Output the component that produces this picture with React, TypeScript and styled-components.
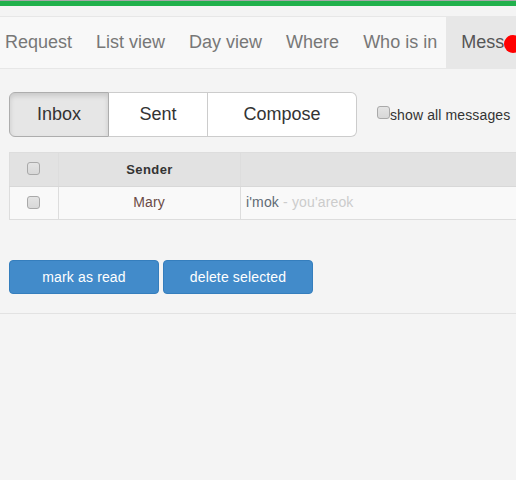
import styled, { createGlobalStyle } from "styled-components";

const GlobalStyle = createGlobalStyle`
  html, body {
    margin: 0;
    padding: 0;
    background: #f4f4f4;
    overflow: hidden;
  }
  * {
    box-sizing: border-box;
  }
`;

const Page = styled.div`
  width: 516px;
  height: 480px;
  overflow: hidden;
  font-family: "Liberation Sans", Arial, sans-serif;
  background: #f4f4f4;
`;

const TopBar = styled.div`
  height: 6px;
  background: #22b14c;
  border-top: 1px solid #a8a8a8;
`;

const Nav = styled.nav`
  display: flex;
  width: 640px;
  height: 53px;
  margin-top: 10px;
  padding-left: 5px;
  background: #f8f8f8;
  border-top: 1px solid #e7e7e7;
  border-bottom: 1px solid #e7e7e7;
`;

const NavItem = styled.a`
  display: flex;
  align-items: center;
  padding-right: 24px;
  font-size: 18px;
  color: #777777;
  &:last-child {
    padding-right: 0;
  }
`;

const NavGroup = styled.div`
  display: flex;
  margin-right: 9px;
`;

const ActiveNavItem = styled.a`
  position: relative;
  display: flex;
  align-items: center;
  padding: 0 12px 0 15px;
  font-size: 18px;
  color: #555555;
  background: #e7e7e7;
`;

const Badge = styled.span`
  position: absolute;
  left: 58px;
  top: 18px;
  width: 18px;
  height: 18px;
  border-radius: 50%;
  background: #ff0000;
`;

const Toolbar = styled.div`
  display: flex;
  align-items: center;
  margin: 23px 0 0 9px;
`;

const Tabs = styled.div`
  display: flex;
  width: 348px;
  height: 45px;
`;

const Tab = styled.div<{ width: number; active?: boolean }>`
  display: flex;
  align-items: center;
  justify-content: center;
  width: ${(props) => props.width}px;
  font-size: 18px;
  color: #333333;
  border: 1px solid ${(props) => (props.active ? "#adadad" : "#cccccc")};
  border-left-width: ${(props) => (props.active ? "1px" : "0")};
  background: ${(props) => (props.active ? "#e6e6e6" : "#ffffff")};
  box-shadow: ${(props) =>
    props.active ? "inset 0 3px 5px rgba(0, 0, 0, 0.125)" : "none"};
  &:first-child {
    border-radius: 6px 0 0 6px;
  }
  &:last-child {
    border-radius: 0 6px 6px 0;
  }
`;

const ShowAll = styled.label`
  display: flex;
  align-items: flex-start;
  margin-left: 20px;
  font-size: 14px;
  letter-spacing: 0.12px;
  color: #333333;
`;

const Check = styled.span`
  display: block;
  flex: none;
  width: 13px;
  height: 13px;
  border: 1px solid #a9a9a9;
  border-radius: 3px;
  background: linear-gradient(#e4e4e4, #d8d8d8);
`;

const TableCheck = styled(Check)`
  margin: -2px 0 0 -2px;
`;

const ShowAllText = styled.span`
  margin-top: 1px;
  line-height: 16px;
`;

const Table = styled.div`
  width: 520px;
  margin: 15px 0 0 9px;
`;

const Row = styled.div<{ head?: boolean }>`
  display: grid;
  grid-template-columns: 49px 182px 1fr;
  height: 34px;
  background: ${(props) => (props.head ? "#e2e2e2" : "#f9f9f9")};
  border-top: 1px solid ${(props) => (props.head ? "#dddddd" : "#d8d8d8")};
  border-bottom: ${(props) => (props.head ? "none" : "1px solid #dddddd")};
`;

const Cell = styled.div<{ center?: boolean }>`
  display: flex;
  align-items: center;
  justify-content: ${(props) => (props.center ? "center" : "flex-start")};
  padding: 0 5px;
  border-left: 1px solid #dddddd;
`;

const SenderHead = styled.span`
  font-size: 13px;
  font-weight: 700;
  letter-spacing: 0.4px;
  color: #333333;
`;

const SenderName = styled.span`
  margin: -2px 1px 0 0;
  font-size: 14px;
  letter-spacing: 0.12px;
  color: #6b4a45;
`;

const Subject = styled.span`
  margin-top: -2px;
  font-size: 14px;
  letter-spacing: 0.15px;
  color: #5f6b75;
`;

const Preview = styled.span`
  color: #cccccc;
`;

const Actions = styled.div`
  display: flex;
  gap: 4px;
  margin: 40px 0 0 9px;
`;

const ActionButton = styled.button`
  width: 150px;
  height: 34px;
  padding: 0;
  font-family: inherit;
  font-size: 14px;
  letter-spacing: 0.15px;
  color: #ffffff;
  background: #428bca;
  border: 1px solid #357ebd;
  border-radius: 4px;
`;

const Divider = styled.hr`
  height: 1px;
  margin: 19px 0 0;
  border: 0;
  background: #e2e2e2;
`;

function App() {
  return (
    <Page>
      <GlobalStyle />
      <TopBar />
      <Nav>
        <NavGroup>
          <NavItem>Request</NavItem>
          <NavItem>List view</NavItem>
          <NavItem>Day view</NavItem>
          <NavItem>Where</NavItem>
          <NavItem>Who is in</NavItem>
        </NavGroup>
        <ActiveNavItem>
          Messages
          <Badge />
        </ActiveNavItem>
      </Nav>
      <Toolbar>
        <Tabs>
          <Tab width={100} active>
            Inbox
          </Tab>
          <Tab width={99}>Sent</Tab>
          <Tab width={149}>Compose</Tab>
        </Tabs>
        <ShowAll>
          <Check />
          <ShowAllText>show all messages</ShowAllText>
        </ShowAll>
      </Toolbar>
      <Table>
        <Row head>
          <Cell center>
            <TableCheck />
          </Cell>
          <Cell center>
            <SenderHead>Sender</SenderHead>
          </Cell>
          <Cell />
        </Row>
        <Row>
          <Cell center>
            <TableCheck />
          </Cell>
          <Cell center>
            <SenderName>Mary</SenderName>
          </Cell>
          <Cell>
            <Subject>
              i'mok <Preview>- you'areok</Preview>
            </Subject>
          </Cell>
        </Row>
      </Table>
      <Actions>
        <ActionButton>mark as read</ActionButton>
        <ActionButton>delete selected</ActionButton>
      </Actions>
      <Divider />
    </Page>
  );
}

export default App;
